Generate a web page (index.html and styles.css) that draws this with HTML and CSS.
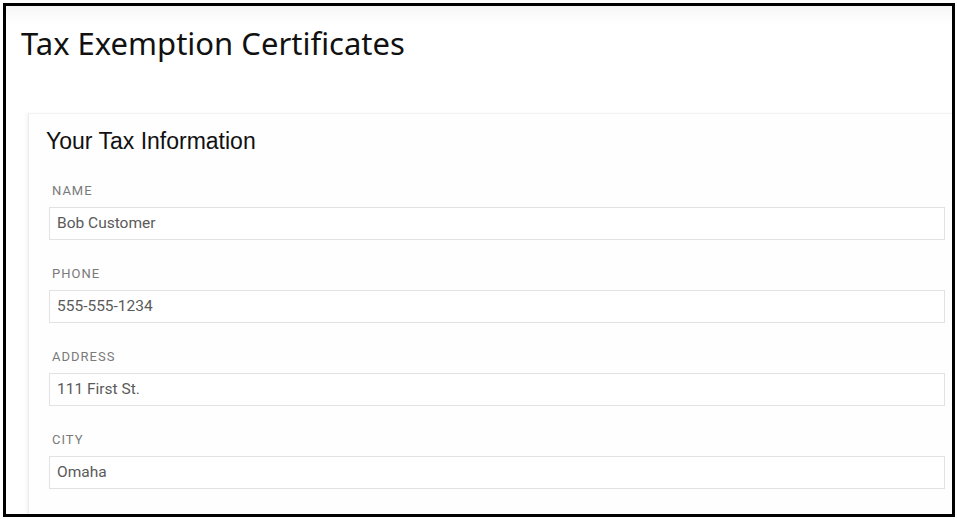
FILE: index.html
```html
<!DOCTYPE html>
<html>
<head>
<meta charset="utf-8">
<link rel="stylesheet" href="styles.css">
</head>
<body>
<div class="frame">
  <header class="page-header">
    <h1 class="page-title">Tax Exemption Certificates</h1>
  </header>
  <section class="card">
    <h2 class="card-title">Your Tax Information</h2>
    <div class="field">
      <label class="field-label">NAME</label>
      <div class="field-input">Bob Customer</div>
    </div>
    <div class="field">
      <label class="field-label">PHONE</label>
      <div class="field-input">555-555-1234</div>
    </div>
    <div class="field">
      <label class="field-label">ADDRESS</label>
      <div class="field-input">111 First St.</div>
    </div>
    <div class="field">
      <label class="field-label">CITY</label>
      <div class="field-input">Omaha</div>
    </div>
  </section>
</div>
</body>
</html>
```
FILE: styles.css
```css
html, body { margin: 0; padding: 0; background: #fff; }
body { padding: 3px; }
.frame {
  width: 952px; height: 514px; box-sizing: border-box;
  border: 3px solid #000; overflow: hidden; background: #fff;
  display: flex; flex-direction: column;
}
.page-header {
  height: 107px; flex: none; box-sizing: border-box;
  background: linear-gradient(#f6f6f6, #fff 18px);
  padding: 17px 0 0 15px;
}
.page-title {
  margin: 0; font-family: "Noto Sans", sans-serif; font-weight: 400;
  font-size: 31px; line-height: 40px; color: #111;
}
.card {
  margin-left: 22px; flex: 1;
  border-top: 1px solid #f2f2f2; border-left: 1px solid #ececec;
  box-shadow: -2px 0 3px rgba(0,0,0,0.04);
  background: #fefefe;
  padding: 13px 0 0 17px;
  display: flex; flex-direction: column;
}
.card-title {
  margin: 0 0 28px 0; font-family: "Liberation Sans", Arial, sans-serif; font-weight: 400;
  font-size: 23px; line-height: 28px; color: #111;
}
.field { display: flex; flex-direction: column; margin-bottom: 26px; }
.field-label {
  font-family: Roboto, sans-serif; font-size: 13px; letter-spacing: 1px;
  color: #7a7a7a; padding-left: 6px; line-height: 16px; margin-bottom: 8px;
}
.field-input {
  margin-left: 3px;
  width: 896px; height: 33px; box-sizing: border-box;
  border: 1px solid #e2e2e2; background: #fff;
  font-family: Roboto, sans-serif; font-size: 15.5px; color: #5a5a5a;
  padding-left: 7px; line-height: 31px;
}
```
